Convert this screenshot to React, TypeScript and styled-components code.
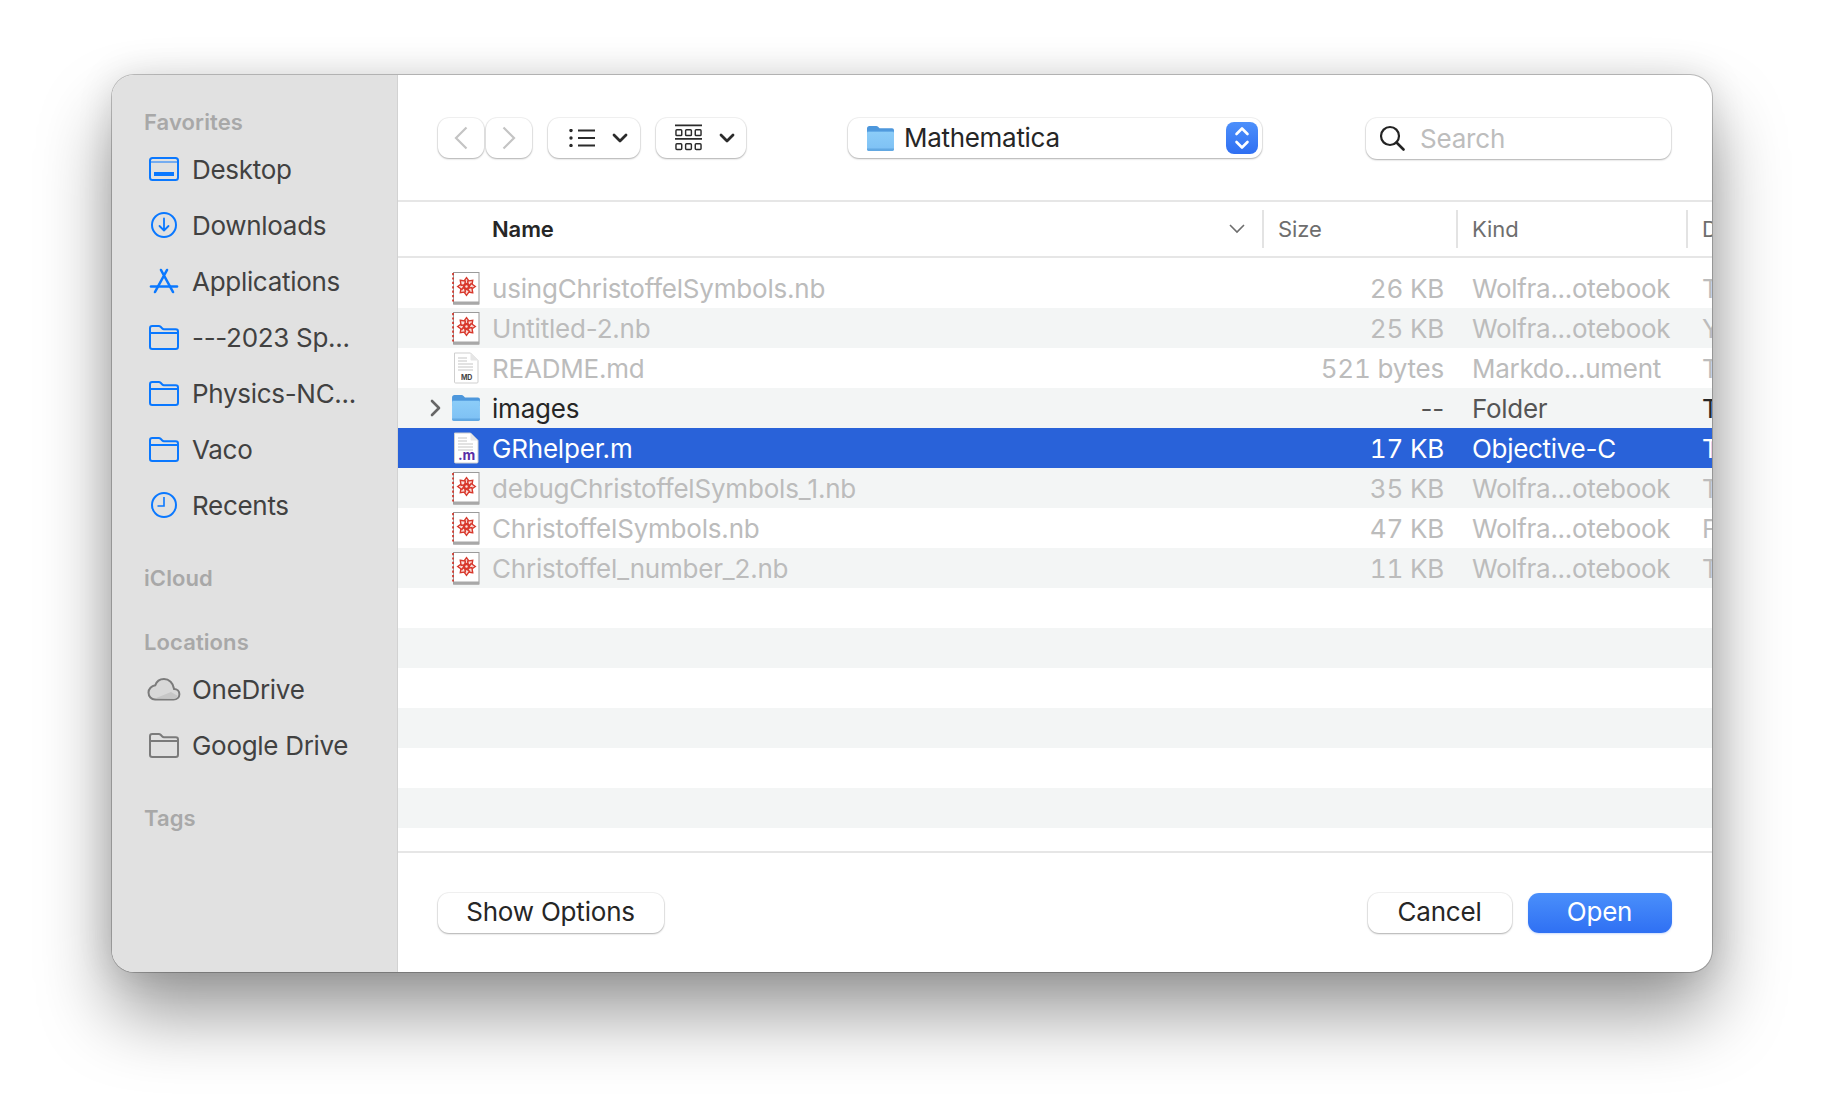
import React from 'react';
import styled, { createGlobalStyle } from 'styled-components';

const GlobalStyle = createGlobalStyle`
  html, body {
    margin: 0;
    background: #fff;
  }
  * {
    box-sizing: border-box;
  }
`;

const FONT = `Inter, "Liberation Sans", sans-serif`;
const BLUE = '#0a78ff';
const CONTROL_SHADOW = '0 0 0 1px rgba(0, 0, 0, 0.05), 0 1px 2px rgba(0, 0, 0, 0.28)';

const Page = styled.div`
  width: 1824px;
  height: 1120px;
  padding: 75px 112px 148px;
  font-family: ${FONT};
  overflow: hidden;
`;

const Window = styled.div`
  display: flex;
  width: 1600px;
  height: 897px;
  border-radius: 22px;
  overflow: hidden;
  background: #fff;
  box-shadow: 0 0 0 1px rgba(0, 0, 0, 0.22), 0 42px 72px rgba(0, 0, 0, 0.4), 0 0 36px rgba(0, 0, 0, 0.12);
`;

const Sidebar = styled.aside`
  flex: 0 0 286px;
  padding: 33px 0 0 32px;
  background: #e1e1e1;
  border-right: 1px solid #d2d2d2;
`;

const Section = styled.section`
  padding-bottom: 31px;
`;

const SectionTitle = styled.div`
  height: 28px;
  margin-bottom: 5px;
  font-size: 22px;
  font-weight: 600;
  line-height: 28px;
  letter-spacing: 0.1px;
  color: #a8a8a8;
`;

const SideItem = styled.div`
  display: flex;
  align-items: center;
  height: 56px;
  font-size: 26px;
  letter-spacing: -0.3px;
  color: #414141;
`;

const SideIcon = styled.span<{ $inset?: number }>`
  display: flex;
  flex: 0 0 48px;
  align-items: center;
  padding-left: ${(p) => p.$inset ?? 5}px;
`;

const Main = styled.main`
  display: flex;
  flex: 1;
  flex-direction: column;
  min-width: 0;
`;

const Toolbar = styled.div`
  display: flex;
  flex: 0 0 127px;
  align-items: center;
  padding: 1px 41px 0 40px;
  border-bottom: 2px solid #e6e6e6;
`;

const NavButton = styled.div<{ $gap?: number }>`
  display: flex;
  align-items: center;
  justify-content: center;
  width: 46px;
  height: 40px;
  margin-left: ${(p) => p.$gap ?? 0}px;
  border-radius: 11px;
  background: #fff;
  box-shadow: ${CONTROL_SHADOW};
`;

const ViewButton = styled.div<{ $width: number; $inset: number }>`
  display: flex;
  align-items: center;
  gap: 17px;
  width: ${(p) => p.$width}px;
  height: 40px;
  margin-left: 16px;
  padding-left: ${(p) => p.$inset}px;
  border-radius: 11px;
  background: #fff;
  box-shadow: ${CONTROL_SHADOW};
`;

const PathPopup = styled.div`
  display: flex;
  align-items: center;
  width: 414px;
  height: 40px;
  margin-left: 102px;
  padding: 0 4px 0 18px;
  border-radius: 11px;
  background: #fff;
  font-size: 26px;
  letter-spacing: -0.3px;
  color: #262626;
  box-shadow: ${CONTROL_SHADOW};
`;

const PathName = styled.span`
  flex: 1;
  margin-left: 9px;
  padding-bottom: 1px;
`;

const Stepper = styled.div`
  display: flex;
  align-items: center;
  justify-content: center;
  width: 32px;
  height: 32px;
  border-radius: 8px;
  background: linear-gradient(#4d90fb, #2f6ff2);
`;

const SearchBox = styled.div`
  display: flex;
  align-items: center;
  width: 305px;
  height: 41px;
  margin-left: auto;
  padding-left: 13px;
  border-radius: 11px;
  background: #fff;
  font-size: 26px;
  letter-spacing: -0.2px;
  color: #bdbdbd;
  box-shadow: ${CONTROL_SHADOW};

  svg {
    margin-right: 15px;
  }
`;

const COLUMNS = '864px 194px 230px 1fr';

const TableHead = styled.div`
  display: grid;
  flex: 0 0 56px;
  grid-template-columns: ${COLUMNS};
  align-items: center;
  border-bottom: 2px solid #e6e6e6;
  font-size: 22px;
  letter-spacing: -0.1px;
  color: #6e6e6e;
`;

const NameHead = styled.div`
  display: flex;
  align-items: center;
  justify-content: space-between;
  padding: 0 17px 0 94px;
  font-weight: 600;
  color: #262626;
`;

const HeadCell = styled.div`
  display: flex;
  align-items: center;
  height: 38px;
  padding-left: 14px;
  border-left: 2px solid #e3e3e3;
  overflow: hidden;
`;

const RowList = styled.div`
  flex: 1;
  padding-top: 10px;
  overflow: hidden;
`;

const Row = styled.div<{ $striped: boolean; $selected?: boolean; $dim?: boolean }>`
  display: grid;
  grid-template-columns: ${COLUMNS};
  align-items: center;
  height: 40px;
  font-size: 26px;
  letter-spacing: -0.2px;
  background: ${(p) => (p.$selected ? '#2962d9' : p.$striped ? '#f3f5f5' : '#fff')};
  color: ${(p) => (p.$selected ? '#fff' : p.$dim ? '#bcbcbc' : '#262626')};
`;

const NameCell = styled.div`
  display: flex;
  align-items: center;
  padding-left: 26px;
`;

const Disclosure = styled.span`
  display: flex;
  flex: 0 0 22px;
  align-items: center;
  justify-content: center;
`;

const FileIconSlot = styled.span`
  display: flex;
  flex: 0 0 40px;
  align-items: center;
  justify-content: center;
`;

const FileName = styled.span`
  margin-left: 6px;
`;

const SizeCell = styled.div<{ $muted?: boolean }>`
  padding-right: 12px;
  text-align: right;
  ${(p) => (p.$muted ? 'color: #555;' : 'font-variant-numeric: tabular-nums;')}
`;

const KindCell = styled.div<{ $muted?: boolean }>`
  padding-left: 16px;
  letter-spacing: -0.3px;
  white-space: nowrap;
  ${(p) => p.$muted && 'color: #555;'}
`;

const DateCell = styled.div`
  padding-left: 16px;
  overflow: hidden;
`;

const Footer = styled.div`
  display: flex;
  flex: 0 0 121px;
  align-items: center;
  padding: 0 40px;
  border-top: 2px solid #e6e6e6;
`;

const PushButton = styled.div<{ $width: number; $primary?: boolean; $gap?: number; $auto?: boolean }>`
  display: flex;
  align-items: center;
  justify-content: center;
  width: ${(p) => p.$width}px;
  height: 40px;
  margin-left: ${(p) => (p.$auto ? 'auto' : `${p.$gap ?? 0}px`)};
  padding: 0 1px 2px 0;
  border-radius: 11px;
  font-size: 26px;
  letter-spacing: -0.2px;
  color: ${(p) => (p.$primary ? '#fff' : '#262626')};
  background: ${(p) => (p.$primary ? 'linear-gradient(#4a8ffb, #2f70f3)' : '#fff')};
  box-shadow: ${(p) => (p.$primary ? '0 1px 2px rgba(47, 112, 243, 0.25)' : CONTROL_SHADOW)};
`;

const DesktopIcon = () => (
  <svg width="30" height="24" viewBox="0 0 30 24" fill="none">
    <rect x="1" y="1" width="28" height="22" rx="2.5" stroke={BLUE} strokeWidth="2" />
    <path d="M1 5h28" stroke={BLUE} strokeWidth="1.2" />
    <rect x="5" y="15" width="20" height="4" fill={BLUE} />
  </svg>
);

const DownloadIcon = () => (
  <svg width="30" height="30" viewBox="0 0 30 30" fill="none" stroke={BLUE}>
    <circle cx="15" cy="15" r="12" strokeWidth="2" />
    <path d="M15 8.5v12M10.5 16l4.5 4.5 4.5-4.5" strokeWidth="1.8" strokeLinecap="round" strokeLinejoin="round" />
  </svg>
);

const AppsIcon = () => (
  <svg width="30" height="26" viewBox="0 0 30 26" fill="none" stroke={BLUE} strokeLinecap="round">
    <path d="M12 2 24 24M18 2 6 24" strokeWidth="2.6" />
    <path d="M2 18.500h26" strokeWidth="2.600" />
  </svg>
);

const FolderOutline = ({ color = BLUE }: { color?: string }) => (
  <svg width="30" height="25" viewBox="0 0 30 25" fill="none" stroke={color} strokeWidth="2">
    <path d="M1 8V3.2C1 2 2 1 3.2 1h6.6c.7 0 1.3.3 1.8.8l1.7 1.7c.4.4 1 .7 1.6.7H26.7C28 4.2 29 5.2 29 6.5v15.3c0 1.2-1 2.2-2.3 2.2H3.2C2 24 1 23 1 21.8V8Zm0 0h28" strokeLinejoin="round" />
  </svg>
);

const RecentsIcon = () => (
  <svg width="30" height="30" viewBox="0 0 30 30" fill="none" stroke={BLUE}>
    <circle cx="15" cy="15" r="12" strokeWidth="2" />
    <path d="M15 7v9H8.5" strokeWidth="1.6" />
  </svg>
);

const CloudIcon = () => (
  <svg width="34" height="24" viewBox="0 0 34 24">
    <path d="M8 22.5h18.5c3.4 0 5.9-2.3 5.9-5.3 0-2.9-2.3-5.1-5.3-5.2C26.300 5.900 22 2 17 2c-4.200 0-7.500 2.500-8.700 6.300C4.500 8.800 1.500 11.900 1.500 15.600c0 3.900 2.900 6.900 6.500 6.900Z" fill="#d8d8d8" stroke="#7b7b7b" strokeWidth="2" />
    <path d="M8 21.500 24 15l7 4c-1 2-2.500 3-4.500 3Z" fill="#c6c6c6" />
  </svg>
);

const ChevronLeft = () => (
  <svg width="14" height="24" viewBox="0 0 14 24" fill="none" stroke="#c4c4c4" strokeWidth="2.200">
    <path d="M12.500 1.500 2 12l10.500 10.500" />
  </svg>
);

const ChevronRight = () => (
  <svg width="14" height="24" viewBox="0 0 14 24" fill="none" stroke="#c4c4c4" strokeWidth="2.200">
    <path d="M1.500 1.500 12 12 1.500 22.500" />
  </svg>
);

const SmallDown = () => (
  <svg width="16" height="10" viewBox="0 0 16 10" fill="none" stroke="#2b2b2b" strokeWidth="2.800" strokeLinecap="round" strokeLinejoin="round">
    <path d="M2 2l6 6 6-6" />
  </svg>
);

const ListIcon = () => (
  <svg width="26" height="18" viewBox="0 0 26 18" fill="#2b2b2b">
    <circle cx="2" cy="1.500" r="1.700" />
    <circle cx="2" cy="9" r="1.700" />
    <circle cx="2" cy="16.500" r="1.700" />
    <rect x="9" y="0.500" width="17" height="2" />
    <rect x="9" y="8" width="17" height="2" />
    <rect x="9" y="15.500" width="17" height="2" />
  </svg>
);

const GalleryIcon = () => (
  <svg width="27" height="28" viewBox="0 0 28 28" fill="none" stroke="#2b2b2b" strokeWidth="1.500">
    <path d="M0 1h28M0 15h28" strokeWidth="1.800" />
    <rect x="1" y="5.500" width="6" height="6" rx="1" />
    <rect x="11" y="5.500" width="6" height="6" rx="1" />
    <rect x="21" y="5.500" width="6" height="6" rx="1" />
    <rect x="1" y="20" width="6" height="6" rx="1" />
    <rect x="11" y="20" width="6" height="6" rx="1" />
    <rect x="21" y="20" width="6" height="6" rx="1" />
  </svg>
);

const StepperIcon = () => (
  <svg width="16" height="24" viewBox="0 0 16 24" fill="none" stroke="#fff" strokeWidth="2.600" strokeLinecap="round" strokeLinejoin="round">
    <path d="M2.500 8 8 2.500 13.500 8M2.500 16 8 21.500 13.500 16" />
  </svg>
);

const SearchIcon = () => (
  <svg width="26" height="26" viewBox="0 0 26 26" fill="none" stroke="#232323">
    <circle cx="11" cy="11" r="9" strokeWidth="2.200" />
    <path d="m17.500 17.500 7 7" strokeWidth="2.600" strokeLinecap="round" />
  </svg>
);

const HeaderChevron = () => (
  <svg width="16" height="10" viewBox="0 0 16 10" fill="none" stroke="#6e6e6e" strokeWidth="1.600">
    <path d="M1 1l7 7 7-7" />
  </svg>
);

const DisclosureIcon = () => (
  <svg width="11" height="18" viewBox="0 0 11 18" fill="none" stroke="#666" strokeWidth="2.600" strokeLinecap="round" strokeLinejoin="round">
    <path d="M2 2l7 7-7 7" />
  </svg>
);

const BlueFolder = ({ id, width }: { id: string; width: number }) => (
  <svg width={width} height={width * 0.93} viewBox="0 0 30 28">
    <defs>
      <linearGradient id={id} x1="0" y1="0" x2="0" y2="1">
        <stop offset="0" stopColor="#8ccdf8" />
        <stop offset="1" stopColor="#7dc0f4" />
      </linearGradient>
    </defs>
    <path d="M1 3.500C1 2 2 1 3.500 1h7c.8 0 1.400.3 2 .9L14 3.500h13c1.200 0 2 .8 2 2V12H1Z" fill="#4d97dc" />
    <rect x="1" y="6.500" width="28" height="20.500" rx="1.800" fill={`url(#${id})`} />
    <path d="M1 24.500h28V25c0 1.200-.8 2-2 2H3c-1.200 0-2-.8-2-2Z" fill="#62a8e2" />
    <path d="M1 6.500h28" stroke="#5ea6e4" strokeWidth="1" />
  </svg>
);

const PETALS = [0, 45, 90, 135, 180, 225, 270, 315];

const NotebookIcon = () => (
  <svg width="28" height="33" viewBox="0 0 28 33">
    <rect x="1.500" y="0.500" width="25.500" height="31.500" fill="#fff" stroke="#9a9a9a" strokeWidth="1" />
    <rect x="1.500" y="29.500" width="25.500" height="3" fill="#a8a8a8" />
    <path d="M1 1v29" stroke="#d32b1e" strokeWidth="1.600" strokeDasharray="2.200 2.200" />
    <g transform="translate(14.500 14.500)">
      {PETALS.map((angle) => (
        <path
          key={angle}
          transform={`rotate(${angle})`}
          d="M0-8.800 3-4.600 0-2.600-3-4.600Z"
          fill="#fbdedb"
          stroke="#d8382c"
          strokeWidth="1.400"
        />
      ))}
      <circle r="3" fill="#d8382c" />
      <circle r="1.200" fill="#fbdedb" />
    </g>
  </svg>
);

const DocIcon = ({ label, color, size }: { label: string; color: string; size: number }) => (
  <svg width="26" height="32" viewBox="0 0 26 32">
    <path d="M1.500 1h16l7.500 7.500V30c0 .6-.4 1-1 1H2.500c-.6 0-1-.4-1-1Z" fill="#fff" stroke="#cfcfcf" strokeWidth="1" />
    <path d="M17.500 1v6.500c0 .6.400 1 1 1H25Z" fill="#e6e6e6" />
    <path d="M5 6h9M5 9h9M5 12h15M5 15h15M5 18h15" stroke="#d9d9d9" strokeWidth="1.300" />
    <text x="13.500" y="28" textAnchor="middle" fontFamily={FONT} fontSize={size} fontWeight="700" fill={color}>
      {label}
    </text>
  </svg>
);

type FileRow = {
  name: string;
  size: string;
  kind: string;
  date: string;
  icon: 'nb' | 'md' | 'folder' | 'm';
  selected?: boolean;
};

const FILES: FileRow[] = [
  { name: 'usingChristoffelSymbols.nb', size: '26 KB', kind: 'Wolfra...otebook', date: 'T', icon: 'nb' },
  { name: 'Untitled-2.nb', size: '25 KB', kind: 'Wolfra...otebook', date: 'Y', icon: 'nb' },
  { name: 'README.md', size: '521 bytes', kind: 'Markdo...ument', date: 'T', icon: 'md' },
  { name: 'images', size: '--', kind: 'Folder', date: 'T', icon: 'folder' },
  { name: 'GRhelper.m', size: '17 KB', kind: 'Objective-C', date: 'T', icon: 'm', selected: true },
  { name: 'debugChristoffelSymbols_1.nb', size: '35 KB', kind: 'Wolfra...otebook', date: 'T', icon: 'nb' },
  { name: 'ChristoffelSymbols.nb', size: '47 KB', kind: 'Wolfra...otebook', date: 'F', icon: 'nb' },
  { name: 'Christoffel_number_2.nb', size: '11 KB', kind: 'Wolfra...otebook', date: 'T', icon: 'nb' },
];

const EMPTY_ROWS = [8, 9, 10, 11, 12, 13];

const fileIcon = (icon: FileRow['icon']) => {
  if (icon === 'nb') return <NotebookIcon />;
  if (icon === 'md') return <DocIcon label="MD" color="#444" size={7} />;
  if (icon === 'm') return <DocIcon label=".m" color="#5a2ea6" size={14} />;
  return <BlueFolder id="rowFolder" width={30} />;
};

export default function App() {
  return (
    <>
      <GlobalStyle />
      <Page>
        <Window>
          <Sidebar>
            <Section>
              <SectionTitle>Favorites</SectionTitle>
              <SideItem><SideIcon><DesktopIcon /></SideIcon>Desktop</SideItem>
              <SideItem><SideIcon><DownloadIcon /></SideIcon>Downloads</SideItem>
              <SideItem><SideIcon><AppsIcon /></SideIcon>Applications</SideItem>
              <SideItem><SideIcon><FolderOutline /></SideIcon>---2023 Sp...</SideItem>
              <SideItem><SideIcon><FolderOutline /></SideIcon>Physics-NC...</SideItem>
              <SideItem><SideIcon><FolderOutline /></SideIcon>Vaco</SideItem>
              <SideItem><SideIcon><RecentsIcon /></SideIcon>Recents</SideItem>
            </Section>
            <Section>
              <SectionTitle>iCloud</SectionTitle>
            </Section>
            <Section>
              <SectionTitle>Locations</SectionTitle>
              <SideItem><SideIcon $inset={3}><CloudIcon /></SideIcon>OneDrive</SideItem>
              <SideItem><SideIcon><FolderOutline color="#7b7b7b" /></SideIcon>Google Drive</SideItem>
            </Section>
            <Section>
              <SectionTitle>Tags</SectionTitle>
            </Section>
          </Sidebar>
          <Main>
            <Toolbar>
              <NavButton><ChevronLeft /></NavButton>
              <NavButton $gap={2}><ChevronRight /></NavButton>
              <ViewButton $width={92} $inset={21}>
                <ListIcon />
                <SmallDown />
              </ViewButton>
              <ViewButton $width={90} $inset={19}>
                <GalleryIcon />
                <SmallDown />
              </ViewButton>
              <PathPopup>
                <BlueFolder id="pathFolder" width={29} />
                <PathName>Mathematica</PathName>
                <Stepper><StepperIcon /></Stepper>
              </PathPopup>
              <SearchBox>
                <SearchIcon />
                Search
              </SearchBox>
            </Toolbar>
            <TableHead>
              <NameHead>
                Name
                <HeaderChevron />
              </NameHead>
              <HeadCell>Size</HeadCell>
              <HeadCell>Kind</HeadCell>
              <HeadCell>D</HeadCell>
            </TableHead>
            <RowList>
              {FILES.map((file, i) => {
                const isFolder = file.icon === 'folder';
                return (
                  <Row
                    key={file.name}
                    $striped={i % 2 === 1}
                    $selected={file.selected}
                    $dim={!isFolder && !file.selected}
                  >
                    <NameCell>
                      <Disclosure>{isFolder && <DisclosureIcon />}</Disclosure>
                      <FileIconSlot>{fileIcon(file.icon)}</FileIconSlot>
                      <FileName>{file.name}</FileName>
                    </NameCell>
                    <SizeCell $muted={isFolder}>{file.size}</SizeCell>
                    <KindCell $muted={isFolder}>{file.kind}</KindCell>
                    <DateCell>{file.date}</DateCell>
                  </Row>
                );
              })}
              {EMPTY_ROWS.map((i) => (
                <Row key={i} $striped={i % 2 === 1} />
              ))}
            </RowList>
            <Footer>
              <PushButton $width={226}>Show Options</PushButton>
              <PushButton $width={144} $auto>Cancel</PushButton>
              <PushButton $width={144} $gap={16} $primary>Open</PushButton>
            </Footer>
          </Main>
        </Window>
      </Page>
    </>
  );
}
